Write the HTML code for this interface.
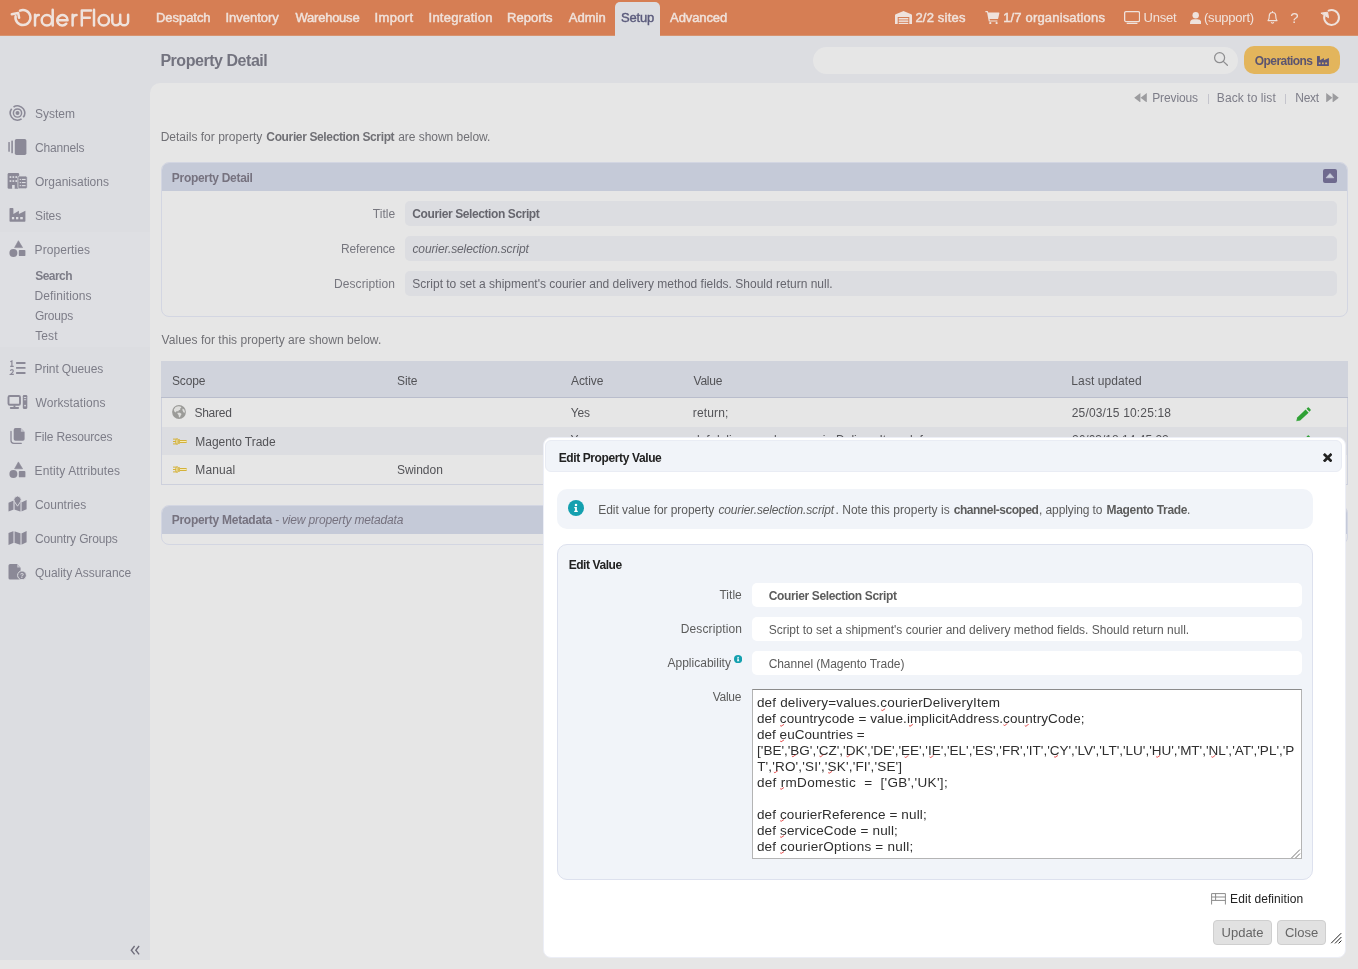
<!DOCTYPE html>
<html>
<head>
<meta charset="utf-8">
<title>Property Detail</title>
<style>
*{box-sizing:border-box;margin:0;padding:0}
html,body{width:1358px;height:969px;overflow:hidden}
body{background:#e6e6e6;font-family:"Liberation Sans",sans-serif;font-size:12px;color:#707075;position:relative}
#root{position:absolute;left:0;top:0;width:1358px;height:969px;overflow:hidden;will-change:transform;background:#e6e6e6}
.a{position:absolute}
.t{position:absolute;white-space:pre;line-height:16px;font-size:12px}
.b{font-weight:700;letter-spacing:-0.34px}
.i{font-style:italic}
#nav{left:0;top:0;width:1358px;height:35px;background:#d67e54}
#hdr{left:0;top:35px;width:1358px;height:925px;background:#dcdde1}
#main{left:150px;top:83px;width:1208px;height:877px;background:#e6e6e6;border-top-left-radius:10px}
.nt{position:absolute;white-space:pre;line-height:16px;font-size:13px;color:#f0e2db;top:10px;-webkit-text-stroke:0.45px #f0e2db}
.sb{position:absolute;white-space:pre;line-height:16px;font-size:12px;color:#7d7d88;left:35px}

.pnl{border:1px solid #d3d6e2;border-radius:8px;overflow:hidden}
.ph{background:#c5cad8}
.pt{color:#76727f}
.fld{background:#dcdde1;border-radius:5px}
.lb{color:#77777f}
.td{color:#535357}
.mf{width:550px;height:24px;background:#fff;border-radius:5px}
.ml{color:#5c5c5c}
.ta{font-size:13.5px;color:#2e2e2e}
.btn{height:25px;background:#e1e1e1;border:1px solid #cfcfcf;border-radius:4px;font-size:13px;line-height:23px;text-align:center;color:#666}
</style>
</head>
<body>
<div id="root">
<div class="a" id="nav"></div>
<div class="a" id="hdr"></div>
<div class="a" style="left:0;top:35px;width:1358px;height:1px;background:#d7936f"></div>
<div class="a" id="main"></div>

<!-- LOGO -->
<svg class="a" style="left:0;top:0" width="150" height="35" viewBox="0 0 150 35" fill="none" stroke="#efe2dc" stroke-width="2.5" stroke-linecap="round" stroke-linejoin="round">
<path d="M20 10.7A7.5 7.5 0 1 1 15.6 16.2"/>
<path d="M11.8 14.3L18.2 13.1L19.1 17.8"/>
<path d="M35 14.8V25.4M35 19.6C35.2 16.6 36.8 15 38.8 15"/>
<circle cx="46.9" cy="20.2" r="5.2"/><path d="M52.7 9.8V25.4"/>
<path d="M57.4 20.2H67.6A5.2 5.2 0 1 0 66.3 23.7"/>
<path d="M72.6 14.8V25.4M72.6 19.6C72.8 16.6 74.4 15 76.6 15"/>
<path d="M81.8 25.4V10.4H91M81.8 17.7H89.8"/>
<path d="M94 9.8V25.4"/>
<circle cx="103.8" cy="20.2" r="5.2"/>
<path d="M112.3 14.8V21.4A3.95 3.95 0 0 0 120.2 21.4V14.8M120.2 21.4A3.95 3.95 0 0 0 128.1 21.4V14.8"/>
</svg>
<!-- NAV ICONS -->
<svg class="a" style="left:895px;top:10.5px" width="17" height="13.5" viewBox="0 0 17 13.5" fill="#efe2dc"><path d="M0 13.5V4.3Q0 3.6 .7 3.3L8 .2Q8.5 0 9 .2L16.3 3.3Q17 3.6 17 4.3V13.5H14.3V5.9H2.7V13.5Z"/><rect x="3.7" y="7" width="9.6" height="1.5"/><rect x="3.7" y="9.4" width="9.6" height="1.5"/><rect x="3.7" y="11.8" width="9.6" height="1.7"/></svg>
<svg class="a" style="left:985px;top:10.5px" width="14.5" height="13.2" viewBox="0 0 14.5 13.2" fill="#efe2dc"><path d="M.4 0H2.3Q2.9 0 3 .6L3.2 1.5H13.8Q14.6 1.5 14.4 2.3L13.2 7.4Q13 8.1 12.3 8.1H4.6L4.8 9.4H12.4V10.6H4.3Q3.8 10.6 3.7 10.1L2 1.2H.4Z"/><circle cx="5.3" cy="12.1" r="1.1"/><circle cx="11.6" cy="12.1" r="1.1"/></svg>
<svg class="a" style="left:1124px;top:10.5px" width="16.2" height="13.2" viewBox="0 0 16.2 13.2" fill="none" stroke="#efe2dc" stroke-width="1.3"><rect x=".65" y=".65" width="14.9" height="9.9" rx="1.3"/><path d="M3.3 12.5H12.9" stroke-linecap="round"/></svg>
<svg class="a" style="left:1190px;top:11.5px" width="11.4" height="12.4" viewBox="0 0 11.4 12.4" fill="#efe2dc"><circle cx="5.7" cy="3.3" r="3.2"/><path d="M0 12.4V11.3Q0 7.3 4 7.3H7.4Q11.4 7.3 11.4 11.3V12.4Z"/></svg>
<svg class="a" style="left:1267px;top:11px" width="11" height="13" viewBox="0 0 11 13" fill="none" stroke="#efe2dc" stroke-width="1.15" stroke-linejoin="round" stroke-linecap="round"><path d="M5.5 .6V1.4M1 9.6C2.4 8.2 2.2 6.6 2.2 5.2C2.2 3 3.6 1.5 5.5 1.5C7.4 1.5 8.8 3 8.8 5.2C8.8 6.6 8.6 8.2 10 9.6Z"/><path d="M4.4 11.6Q5.5 12.5 6.6 11.6"/></svg>
<svg class="a" style="left:1319px;top:7px" width="24" height="22" viewBox="0 0 24 22" fill="none" stroke="#efe2dc" stroke-width="2" stroke-linecap="round" stroke-linejoin="round"><path d="M9.6 3.7A7.4 7.4 0 1 1 5.4 8.6"/><path d="M2.3 6.1L8.6 5.2L9.5 10.4Z" fill="#efe2dc" stroke-width="1"/></svg>
<!-- NAV TEXT -->
<div class="a" style="left:615px;top:2px;width:45px;height:34px;background:#dcdde1;border-radius:5px 5px 0 0"></div>
<span class="nt" style="left:155.98px;letter-spacing:-0.044px;">Despatch</span>
<span class="nt" style="left:225.45px;letter-spacing:-0.007px;">Inventory</span>
<span class="nt" style="left:295.49px;letter-spacing:-0.233px;">Warehouse</span>
<span class="nt" style="left:374.55px;letter-spacing:0.330px;">Import</span>
<span class="nt" style="left:428.55px;letter-spacing:0.241px;">Integration</span>
<span class="nt" style="left:507.08px;letter-spacing:0.001px;">Reports</span>
<span class="nt" style="left:568.72px;letter-spacing:0.053px;">Admin</span>
<span class="nt" style="left:620.96px;letter-spacing:-0.162px;color:#5b5b7c;-webkit-text-stroke:0.4px #5b5b7c">Setup</span>
<span class="nt" style="left:670.12px;letter-spacing:-0.109px;">Advanced</span>
<span class="nt" style="left:915.40px;letter-spacing:0.200px;">2/2 sites</span>
<span class="nt" style="left:1003.16px;letter-spacing:0.172px;">1/7 organisations</span>
<span class="nt" style="left:1143.55px;letter-spacing:-0.193px;-webkit-text-stroke:0">Unset</span>
<span class="nt" style="left:1204.04px;letter-spacing:-0.240px;-webkit-text-stroke:0">(support)</span>
<span class="nt" style="left:1290.2px;top:9.8px;-webkit-text-stroke:0;font-size:15px">?</span>

<!-- PAGE HEADER -->
<span class="t b" style="left:160.38px;letter-spacing:-0.458px;top:51px;font-size:16px;line-height:20px;color:#73737f">Property Detail</span>
<div class="a" style="left:813px;top:47px;width:425px;height:27px;border-radius:14px;background:#e6e6e6"></div>
<div class="a" style="left:1244px;top:46px;width:96px;height:28px;border-radius:10px;background:#e3b55c"></div>
<span class="t b" style="left:1254.86px;letter-spacing:-0.575px;top:53px;color:#5b5470">Operations</span>

<!-- SIDEBAR ICONS -->
<div class="a" style="left:0;top:232px;width:150px;height:115px;background:#dedfe3"></div>
<svg class="a" style="left:0;top:0" width="40" height="600" viewBox="0 0 40 600" fill="#8b8997">
<g fill="none" stroke="#8b8997"><circle cx="17.5" cy="113" r="7.2" stroke-width="1.6" stroke-dasharray="20.02 2.6" transform="rotate(55.4 17.5 113)"/><circle cx="17.5" cy="113" r="4.1" stroke-width="1.45"/></g><circle cx="17.5" cy="113" r="2"/>
<rect x="14.8" y="139" width="11.6" height="15.9" rx="1.7"/><rect x="8.3" y="142" width="1.5" height="9.8" rx=".5"/><rect x="11.3" y="140.6" width="1.6" height="12.7" rx=".5"/>
<rect x="7.6" y="173.1" width="11.6" height="15.7" rx="1.3"/>
<g fill="#dcdde1"><rect x="9.6" y="176.2" width="1.7" height="1.7"/><rect x="12.5" y="176.2" width="1.7" height="1.7"/><rect x="15.4" y="176.2" width="1.7" height="1.7"/><rect x="9.6" y="180.2" width="1.7" height="1.7"/><rect x="12.5" y="180.2" width="1.7" height="1.7"/><rect x="15.4" y="180.2" width="1.7" height="1.7"/><rect x="12.1" y="185" width="2.6" height="3.9"/></g>
<rect x="17.9" y="176" width="9.4" height="12.8" rx="1.7" stroke="#dcdde1" stroke-width=".8"/>
<g fill="#dcdde1"><rect x="19.7" y="178.9" width="1.2" height="1.1"/><rect x="21.8" y="178.9" width="3.8" height="1.1"/><rect x="19.7" y="182" width="1.2" height="1.1"/><rect x="21.8" y="182" width="3.8" height="1.1"/><rect x="19.7" y="185.1" width="1.2" height="1.1"/><rect x="21.8" y="185.1" width="3.8" height="1.1"/></g>
<path d="M9.5 208.7Q9.5 208 10.2 208H12.7Q13.4 208 13.4 208.7V213.9L18.9 210.7V213.9L25.4 210.7V221.1Q25.4 221.8 24.7 221.8H10.2Q9.5 221.8 9.5 221.1Z"/>
<g fill="#dcdde1"><rect x="11.9" y="217" width="2.3" height="2.3"/><rect x="16" y="217" width="2.3" height="2.3"/><rect x="20.2" y="217" width="2.6" height="2.3"/></g>
<path d="M18.4 240.7L22.6 247.6H14.6Z" stroke="#8b8997" stroke-width=".6" stroke-linejoin="round"/><circle cx="13.4" cy="252.9" r="4"/><rect x="18.8" y="249.9" width="6.6" height="6.2" rx=".9"/>
<g fill="none" stroke="#8b8997" stroke-width="1.2"><path d="M10.3 361.7L11.9 361V366.3M10.2 366.3H13.7"/><path d="M10.4 370.9Q10.6 369.7 11.9 369.7Q13.3 369.7 13.3 370.9Q13.3 371.9 10.5 374.4H13.8"/></g>
<rect x="16" y="362.1" width="9.6" height="1.8" rx=".6"/><rect x="16" y="367" width="9.6" height="1.8" rx=".6"/><rect x="16" y="372.1" width="9.6" height="1.8" rx=".6"/>
<rect x="8.5" y="396" width="11.5" height="8.7" rx="1.3" fill="none" stroke="#8b8997" stroke-width="1.9"/><rect x="13.5" y="405.3" width="1.9" height="2"/><rect x="9.8" y="407.1" width="9.3" height="1.8" rx=".8"/>
<rect x="22.8" y="395.1" width="4.5" height="13.8" rx="1.1"/><g fill="#dcdde1"><rect x="23.9" y="397" width="2.3" height=".9"/><rect x="23.9" y="399.3" width="2.3" height=".9"/><circle cx="25.05" cy="405.6" r=".9"/></g>
<path d="M15.5 428.1H20.6L24.6 432.1V439Q24.6 440.8 22.8 440.8H15.5Q13.7 440.8 13.7 439V429.9Q13.7 428.1 15.5 428.1Z"/><path d="M20.9 428.2L24.5 431.8H20.9Z" fill="#c3c3cb"/>
<path d="M11 431.5V440.5Q11 443.3 13.8 443.3H21.3" fill="none" stroke="#8b8997" stroke-width="1.3" stroke-linecap="round"/>
<path d="M18.4 461.9L22.6 468.79999999999995H14.6Z" stroke="#8b8997" stroke-width=".6" stroke-linejoin="round"/><circle cx="13.4" cy="474.1" r="4"/><rect x="18.8" y="471.1" width="6.6" height="6.2" rx=".9"/>
<g fill="#bab9c3"><path d="M13.1 500.8L15 501V509.7L13.1 509.7Z"/><path d="M20.2 501L21.9 502.3V511.3L20.2 511.4Z"/><path d="M13.1 531.3L15 531.4V543.1H13.1Z"/><path d="M20.2 533.3H21.9V544.4L20.2 544.7Z"/></g>
<path d="M8.5 502.8L13.1 500.8V509.7L8.5 511.6Z"/><path d="M15 501L20.2 501V511.4L15 509.7Z"/><path d="M21.9 502.3L26.6 500.1V509.2L21.9 511.3Z"/>
<path d="M17.5 506.2L14.5 501.7A3.6 3.6 0 1 1 20.5 501.7Z" stroke="#dcdde1" stroke-width=".9"/>
<path d="M8.5 533L13.1 531.3V543.1L8.5 544.9Z"/><path d="M15 531.4L20.2 533.3V544.7L15 543.1Z"/><path d="M21.9 533.3L26.6 531.1V542.2L21.9 544.4Z"/>
<path d="M10.2 564.1H17L20.6 567.7V578Q20.6 579.6 19 579.6H10.2Q8.5 579.6 8.5 578V565.8Q8.5 564.1 10.2 564.1Z"/><path d="M17.2 564.2L20.5 567.5H17.2Z" fill="#c3c3cb"/>
<circle cx="22" cy="575.3" r="4.4" stroke="#dcdde1" stroke-width="1"/>
<text x="22" y="577.7" font-family="Liberation Sans" font-size="6.5" font-weight="700" text-anchor="middle" fill="#dcdde1">?</text>
</svg>
<svg class="a" style="left:128px;top:943px" width="14" height="14" viewBox="128 943 14 14" fill="none" stroke="#6f6d7b" stroke-width="1.4"><path d="M134.6 946L131.3 950.2L134.6 954.4M139.1 946L135.8 950.2L139.1 954.4"/></svg>
<!-- SIDEBAR -->
<span class="sb" style="left:35.01px;letter-spacing:-0.016px;top:106px">System</span>
<span class="sb" style="left:34.94px;letter-spacing:-0.166px;top:140px">Channels</span>
<span class="sb" style="left:34.98px;letter-spacing:-0.004px;top:174px">Organisations</span>
<span class="sb" style="left:35.01px;letter-spacing:-0.127px;top:208px">Sites</span>
<span class="sb" style="left:34.57px;letter-spacing:0.079px;top:242px">Properties</span>
<span class="sb b" style="left:35.20px;letter-spacing:-0.528px;top:268px">Search</span>
<span class="sb" style="left:34.57px;letter-spacing:0.089px;top:288px">Definitions</span>
<span class="sb" style="left:34.95px;letter-spacing:-0.204px;top:308px">Groups</span>
<span class="sb" style="left:35.28px;letter-spacing:0.081px;top:328px">Test</span>
<span class="sb" style="left:34.57px;letter-spacing:-0.130px;top:361px">Print Queues</span>
<span class="sb" style="left:35.50px;letter-spacing:0.068px;top:395px">Workstations</span>
<span class="sb" style="left:34.57px;letter-spacing:-0.163px;top:429px">File Resources</span>
<span class="sb" style="left:34.57px;letter-spacing:0.134px;top:463px">Entity Attributes</span>
<span class="sb" style="left:34.94px;letter-spacing:-0.015px;top:497px">Countries</span>
<span class="sb" style="left:34.94px;letter-spacing:-0.143px;top:531px">Country Groups</span>
<span class="sb" style="left:34.98px;letter-spacing:-0.026px;top:565px">Quality Assurance</span>

<!--MAIN-->
<span class="t" style="left:1152.17px;letter-spacing:-0.110px;top:89.6px;color:#7d7d88">Previous</span>
<span class="t" style="left:1216.87px;letter-spacing:0.076px;top:89.6px;color:#7d7d88">Back to list</span>
<span class="t" style="left:1295.27px;letter-spacing:-0.272px;top:89.6px;color:#7d7d88">Next</span>
<div class="a" style="left:1207.5px;top:93.5px;width:1px;height:10px;background:#c4c4cc"></div>
<div class="a" style="left:1285px;top:93.5px;width:1px;height:10px;background:#c4c4cc"></div>

<span class="t" style="left:160.67px;letter-spacing:0.012px;top:129px">Details for property</span>
<span class="t b" style="left:266.36px;letter-spacing:-0.368px;top:129px">Courier Selection Script</span>
<span class="t" style="left:398.24px;letter-spacing:-0.042px;top:129px">are shown below.</span>

<div class="a pnl" style="left:161px;top:162px;width:1187px;height:155px"><div class="ph" style="height:28px"></div></div>
<span class="t b pt" style="left:171.85px;letter-spacing:-0.308px;top:170px">Property Detail</span>
<div class="a" style="left:1323px;top:169px;width:14px;height:14px;background:#6f6a8e;border-radius:2px"></div>
<div class="a fld" style="left:405px;top:201px;width:932px;height:25px"></div>
<div class="a fld" style="left:405px;top:236px;width:932px;height:25px"></div>
<div class="a fld" style="left:405px;top:271px;width:932px;height:25px"></div>
<span class="t lb" style="left:372.68px;letter-spacing:0.092px;top:206px">Title</span>
<span class="t lb" style="left:341.07px;letter-spacing:-0.145px;top:241px">Reference</span>
<span class="t lb" style="left:333.97px;letter-spacing:0.083px;top:276px">Description</span>
<span class="t b" style="left:412.36px;letter-spacing:-0.403px;top:206px;color:#66666e">Courier Selection Script</span>
<span class="t i" style="left:412.46px;letter-spacing:-0.111px;top:241px;color:#66666e">courier.selection.script</span>
<span class="t" style="left:412.31px;letter-spacing:-0.002px;top:276px;color:#66666e">Script to set a shipment's courier and delivery method fields. Should return null.</span>

<span class="t" style="left:161.60px;letter-spacing:0.027px;top:332px">Values for this property are shown below.</span>

<div class="a" style="left:161px;top:361px;width:1187px;height:124px;border:1px solid #cdd0dc;border-top:none"></div>
<div class="a" style="left:161px;top:361px;width:1187px;height:37px;background:#d0d3dc;border-bottom:1px solid #b9bdcc"></div>
<div class="a" style="left:162px;top:427px;width:1185px;height:28px;background:#dcdde1"></div>
<span class="t td" style="left:171.91px;letter-spacing:-0.113px;top:373px">Scope</span>
<span class="t td" style="left:397.01px;letter-spacing:-0.103px;top:373px">Site</span>
<span class="t td" style="left:570.93px;letter-spacing:-0.026px;top:373px">Active</span>
<span class="t td" style="left:693.50px;letter-spacing:-0.207px;top:373px">Value</span>
<span class="t td" style="left:1071.37px;letter-spacing:0.087px;top:373px">Last updated</span>
<span class="t td" style="left:194.51px;letter-spacing:-0.277px;top:405px">Shared</span>
<span class="t td" style="left:570.69px;letter-spacing:-0.190px;top:405px">Yes</span>
<span class="t td" style="left:692.75px;letter-spacing:0.165px;top:405px">return;</span>
<span class="t td" style="left:1071.75px;letter-spacing:0.154px;top:405px">25/03/15 10:25:18</span>
<span class="t td" style="left:195.37px;letter-spacing:-0.042px;top:434px">Magento Trade</span>
<span class="t td" style="left:570.5px;top:432px">Yes</span>
<span class="t td" style="left:693px;top:432px">def delivery=values.courierDeliveryItem def</span>
<span class="t td" style="left:1072px;top:432px">26/03/18 14:45:22</span>
<span class="t td" style="left:195.37px;letter-spacing:0.066px;top:462px">Manual</span>
<span class="t td" style="left:397.01px;letter-spacing:-0.035px;top:462px">Swindon</span>

<div class="a pnl" style="left:161px;top:505px;width:1187px;height:40px"><div class="ph" style="height:28px"></div></div>
<span class="t b pt" style="left:171.65px;letter-spacing:-0.255px;top:512px">Property Metadata</span>
<span class="t pt" style="left:275.3px;top:512px">-</span>
<span class="t i pt" style="left:281.99px;letter-spacing:-0.156px;top:512px">view property metadata</span>
<!-- MAIN ICONS -->
<svg class="a" style="left:1133.5px;top:92.5px" width="13" height="9.5" viewBox="0 0 13 9.5" fill="#9c9c9f"><path d="M6.4 0V9.5L.2 4.75ZM12.8 0V9.5L6.6 4.75Z"/></svg>
<svg class="a" style="left:1326px;top:92.5px" width="13" height="9.5" viewBox="0 0 13 9.5" fill="#9c9c9f"><path d="M.2 0V9.5L6.4 4.75ZM6.6 0V9.5L12.8 4.75Z"/></svg>
<svg class="a" style="left:1212px;top:50px" width="18" height="18" viewBox="0 0 18 18" fill="none" stroke="#8e8e90" stroke-width="1.25" stroke-linecap="round"><circle cx="7.6" cy="7.7" r="5"/><path d="M11.3 11.4L15.4 15.3"/></svg>
<svg class="a" style="left:1317.1px;top:55.8px" width="12" height="10" viewBox="0 0 12 10" fill="#5b5578"><path d="M0 .5Q0 0 .5 0H2.4Q2.9 0 2.9 .5V4.3L6.9 1.9V4.3L11.9 1.9V9.5Q11.9 10 11.4 10H.5Q0 10 0 9.5Z"/><g fill="#e2b55f"><rect x="1.8" y="6.5" width="1.7" height="1.7"/><rect x="5" y="6.5" width="1.7" height="1.7"/><rect x="8.2" y="6.5" width="1.9" height="1.7"/></g></svg>
<svg class="a" style="left:1323px;top:169px" width="14" height="14" viewBox="0 0 14 14"><path d="M3.1 8.8L7 4.4L10.9 8.8Z" fill="#cbcfdc" stroke="#cbcfdc" stroke-width=".6" stroke-linejoin="round"/></svg>
<svg class="a" style="left:172px;top:405px" width="14" height="14" viewBox="0 0 14 14"><circle cx="7" cy="7" r="6.9" fill="#9b9b98"/><g fill="#dededc"><path d="M1.8 4.4L3.6 2.1L6.2 1.2L8.6 1.5L9.5 2.9L8 3.4L8.4 4.7L6.8 5.2L6.2 6.6L4.7 6.1L3.8 7.5L2.3 6.6Z"/><path d="M5.6 7.8L8 7.7L9.6 8.9L8.7 10.6L7.9 12.6L6.9 12L6.6 10L5.4 8.8Z"/><path d="M10.6 3.4L12.2 4.5L13 7L12.1 8L11 6.4L10.4 5Z"/></g></svg>
<svg class="a" style="left:172.5px;top:438px" width="14" height="7" viewBox="0 0 14 7"><g fill="#d4b23a"><rect x="0" y=".6" width="3" height="1"/><rect x="0" y="3" width="3" height="1"/><rect x="0" y="5.4" width="3" height="1"/><path d="M2.2 3.5Q2.2 0 4.6 0V7Q2.2 7 2.2 3.5Z"/><rect x="5.2" y=".9" width="1.5" height="5.2" rx=".5"/><rect x="6.4" y="1.9" width="7.4" height="3.2" rx=".8"/></g><rect x="7" y="3" width="6.6" height="1" fill="#f6ebb4"/><rect x="3.3" y="1.6" width=".9" height="3.8" fill="#f3e6a6"/></svg>
<svg class="a" style="left:172.5px;top:466px" width="14" height="7" viewBox="0 0 14 7"><g fill="#d4b23a"><rect x="0" y=".6" width="3" height="1"/><rect x="0" y="3" width="3" height="1"/><rect x="0" y="5.4" width="3" height="1"/><path d="M2.2 3.5Q2.2 0 4.6 0V7Q2.2 7 2.2 3.5Z"/><rect x="5.2" y=".9" width="1.5" height="5.2" rx=".5"/><rect x="6.4" y="1.9" width="7.4" height="3.2" rx=".8"/></g><rect x="7" y="3" width="6.6" height="1" fill="#f6ebb4"/><rect x="3.3" y="1.6" width=".9" height="3.8" fill="#f3e6a6"/></svg>
<svg class="a" style="left:1295.5px;top:406.5px" width="15" height="15" viewBox="0 0 15 15" fill="#2fa135"><path d="M.3 14.3L1.2 10.6L9.6 2.6L12.6 5.7L4.2 13.5Z"/><path d="M10.5 1.8L11.8.5Q12.3 0 12.8.5L14.6 2.4Q15 2.9 14.6 3.4L13.4 4.8Z"/><path d="M1 12.6L2.2 13.8" stroke="#8fd093" stroke-width=".6"/></svg>
<svg class="a" style="left:1295.5px;top:434.5px" width="15" height="15" viewBox="0 0 15 15" fill="#2fa135"><path d="M.3 14.3L1.2 10.6L9.6 2.6L12.6 5.7L4.2 13.5Z"/><path d="M10.5 1.8L11.8.5Q12.3 0 12.8.5L14.6 2.4Q15 2.9 14.6 3.4L13.4 4.8Z"/><path d="M1 12.6L2.2 13.8" stroke="#8fd093" stroke-width=".6"/></svg>
<!--MODAL-->
<div class="a" style="left:542.5px;top:437px;width:803.5px;height:520.5px;background:#fff;border:1px solid #eceef6;border-radius:8px"></div>
<div class="a" style="left:545px;top:440px;width:797px;height:32px;background:#f1f4f9;border:1px solid #e9ecf4;border-radius:6px"></div>
<span class="t b" style="left:558.65px;letter-spacing:-0.385px;top:450px;color:#222">Edit Property Value</span>
<div class="a" style="left:557px;top:489px;width:756px;height:40px;background:#f1f4f9;border-radius:10px"></div>
<div class="a" style="left:568px;top:500px;width:16px;height:16px;border-radius:8px;background:#14a0af"></div>
<span class="t" style="left:598.27px;letter-spacing:-0.059px;top:502px;color:#5c5c5c">Edit value for property</span>
<span class="t i" style="left:718.46px;letter-spacing:-0.142px;top:502px;color:#5c5c5c">courier.selection.script</span>
<span class="t" style="left:835.45px;letter-spacing:0.038px;top:502px;color:#5c5c5c">. Note this property is</span>
<span class="t b" style="left:953.78px;letter-spacing:-0.477px;top:502px;color:#5c5c5c">channel-scoped</span>
<span class="t" style="left:1039.07px;letter-spacing:-0.111px;top:502px;color:#5c5c5c">, applying to</span>
<span class="t b" style="left:1106.45px;letter-spacing:-0.306px;top:502px;color:#5c5c5c">Magento Trade</span>
<span class="t" style="left:1187px;top:502px;color:#5c5c5c">.</span>

<div class="a" style="left:557px;top:544px;width:756px;height:336px;background:#f1f4f9;border:1px solid #dde1ee;border-radius:10px"></div>
<span class="t b" style="left:568.65px;letter-spacing:-0.427px;top:557px;color:#222">Edit Value</span>
<div class="a mf" style="left:752px;top:583px"></div>
<div class="a mf" style="left:752px;top:617px"></div>
<div class="a mf" style="left:752px;top:651px"></div>
<span class="t ml" style="left:719.48px;letter-spacing:0.017px;top:587px">Title</span>
<span class="t ml" style="left:680.77px;letter-spacing:0.123px;top:621px">Description</span>
<span class="t ml" style="left:667.43px;letter-spacing:0.014px;top:655px">Applicability</span>
<span class="t ml" style="left:712.70px;letter-spacing:-0.282px;top:689px">Value</span>
<span class="t b" style="left:768.76px;letter-spacing:-0.372px;top:588px;color:#5c5c5c">Courier Selection Script</span>
<span class="t" style="left:768.71px;letter-spacing:-0.001px;top:622px;color:#5c5c5c">Script to set a shipment's courier and delivery method fields. Should return null.</span>
<span class="t" style="left:768.64px;letter-spacing:-0.045px;top:656px;color:#5c5c5c">Channel (Magento Trade)</span>
<div class="a" style="left:752px;top:689px;width:550px;height:170px;background:#fff;border:1px solid #b4b4b4;border-top-color:#8c8c8c"></div>
<span class="t ta" style="left:756.88px;letter-spacing:0.186px;top:695.0px">def delivery=values.courierDeliveryItem</span>
<span class="t ta" style="left:756.88px;letter-spacing:0.106px;top:711.0px">def countrycode = value.implicitAddress.countryCode;</span>
<span class="t ta" style="left:756.88px;letter-spacing:0.055px;top:727.0px">def euCountries =</span>
<span class="t ta" style="left:757.09px;letter-spacing:0.002px;top:743.0px">['BE','BG','CZ','DK','DE','EE','IE','EL','ES','FR','IT','CY','LV','LT','LU','HU','MT','NL','AT','PL','P</span>
<span class="t ta" style="left:757.15px;letter-spacing:0.179px;top:759.0px">T','RO','SI','SK','FI','SE']</span>
<span class="t ta" style="left:756.88px;letter-spacing:0.327px;top:775.0px">def rmDomestic  =  ['GB','UK'];</span>
<span class="t ta" style="left:756.88px;letter-spacing:0.132px;top:807.0px">def courierReference = null;</span>
<span class="t ta" style="left:756.88px;letter-spacing:0.149px;top:823.0px">def serviceCode = null;</span>
<span class="t ta" style="left:756.88px;letter-spacing:0.232px;top:839.0px">def courierOptions = null;</span>
<span class="t" style="left:1230.07px;letter-spacing:0.073px;top:891px;color:#222">Edit definition</span>
<div class="a btn" style="left:1213px;top:920px;width:59px">Update</div>
<div class="a btn" style="left:1277px;top:920px;width:49px">Close</div>
<!-- MODAL ICONS -->
<svg class="a" style="left:0;top:0" width="1358" height="969" viewBox="0 0 1358 969" fill="none" stroke="#e02a2a" stroke-width=".85"><path d="M881.3 710.0q.9 1.1 1.9 .1t1.9-1.2M780.2 725.6q.9 1.1 1.9 .1t1.9-1.2M909.1 725.6q.9 1.1 1.9 .1t1.9-1.2M1003.5 724.9q.9 1.1 1.9 .1t1.9-1.2M1024.8 725.6q.9 1.1 1.9 .1t1.9-1.2M780.2 741.1q.9 1.1 1.9 .1t1.9-1.2M791.9 756.1q.9 1.1 1.9 .1t1.9-1.2M819.5 756.1q.9 1.1 1.9 .1t1.9-1.2M846.5 756.1q.9 1.1 1.9 .1t1.9-1.2M904.6 756.9q.9 1.1 1.9 .1t1.9-1.2M929.6 756.9q.9 1.1 1.9 .1t1.9-1.2M1054.1 756.7q.9 1.1 1.9 .1t1.9-1.2M1156.2 756.7q.9 1.1 1.9 .1t1.9-1.2M1211.4 756.7q.9 1.1 1.9 .1t1.9-1.2M773.9 772.1q.9 1.1 1.9 .1t1.9-1.2M828.2 772.6q.9 1.1 1.9 .1t1.9-1.2M780.2 788.7q.9 1.1 1.9 .1t1.9-1.2M780.2 820.7q.9 1.1 1.9 .1t1.9-1.2M780.2 836.8q.9 1.1 1.9 .1t1.9-1.2M780.2 852.8q.9 1.1 1.9 .1t1.9-1.2"/></svg>

<svg class="a" style="left:568px;top:500px" width="16" height="16" viewBox="0 0 16 16" fill="#fff"><circle cx="8" cy="5" r="1.25"/><path d="M6.3 7.1H8.9V10.7H9.8V11.9H6.2V10.7H7.1V8.3H6.3Z"/></svg>
<svg class="a" style="left:734px;top:655px" width="8.2" height="8.2" viewBox="0 0 16 16"><circle cx="8" cy="8" r="8" fill="#14a0af"/><g fill="#fff"><circle cx="8" cy="4.8" r="1.5"/><path d="M6 7H9.3V10.8H10.2V12.2H5.9V10.8H6.8V8.4H6Z"/></g></svg>
<svg class="a" style="left:1323px;top:453px" width="9.4" height="9.4" viewBox="0 0 10 10" stroke="#222" stroke-width="2.9" stroke-linecap="butt"><path d="M.9 .9L9.1 9.1M9.1 .9L.9 9.1"/></svg>
<svg class="a" style="left:1210.5px;top:893px" width="15" height="11.5" viewBox="0 0 15 11.5" fill="none" stroke="#8a8a8a" stroke-width="1"><path d="M.6 11.5V.6H14.4V11.5M.6 4H14.4M.6 7.4H14.4M4.6 .6V7.4"/></svg>
<svg class="a" style="left:1329px;top:931px" width="14" height="14" viewBox="0 0 14 14" stroke="#222" stroke-width="1" fill="none"><path d="M2.2 12.2L12.2 2.2M6 12.4L12.4 6M9.6 12.4L12.4 9.6"/></svg>
<svg class="a" style="left:1289px;top:847px" width="12" height="12" viewBox="0 0 12 12" stroke="#777" stroke-width="1" fill="none"><path d="M2.5 11L11 2.5M6.5 11L11 6.5"/></svg>
</div>
</body>
</html>
